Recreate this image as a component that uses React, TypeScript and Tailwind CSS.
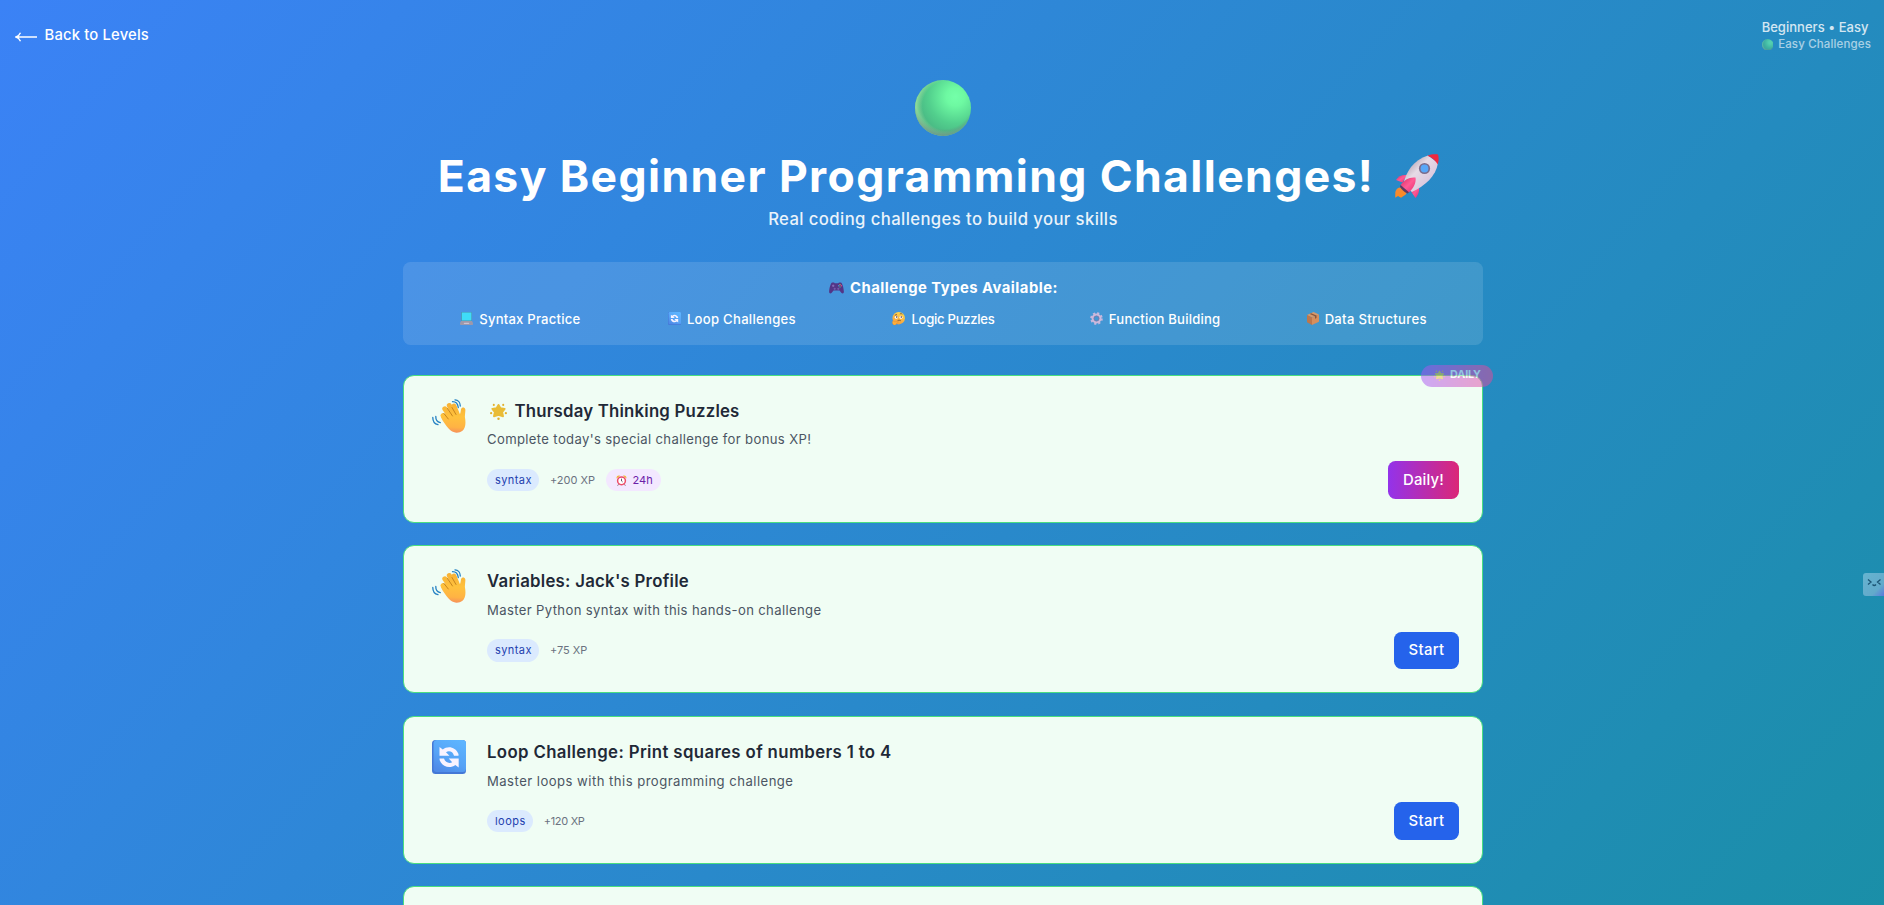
import type { ReactNode } from "react";

function GreenBall({ id, className }: { id: string; className: string }) {
  return (
    <svg viewBox="0 0 56 56" className={className} aria-hidden="true">
      <defs>
        <radialGradient id={`${id}-a`} cx="0.72" cy="0.3" r="0.8">
          <stop offset="0" stopColor="#74ffa9" />
          <stop offset="0.2" stopColor="#6ef9a2" />
          <stop offset="0.6" stopColor="#52cf8d" />
          <stop offset="1" stopColor="#45ad80" />
        </radialGradient>
        <radialGradient id={`${id}-b`} cx="0.58" cy="0.46" r="0.57">
          <stop offset="0.78" stopColor="#9bdc9d" stopOpacity="0" />
          <stop offset="1" stopColor="#9be3a0" stopOpacity="0.9" />
        </radialGradient>
        <radialGradient id={`${id}-c`} cx="0.52" cy="0.36" r="0.64">
          <stop offset="0.8" stopColor="#63907f" stopOpacity="0" />
          <stop offset="1" stopColor="#668f88" stopOpacity="0.9" />
        </radialGradient>
      </defs>
      <circle cx="28" cy="28" r="28" fill={`url(#${id}-a)`} />
      <circle cx="28" cy="28" r="28" fill={`url(#${id}-b)`} />
      <circle cx="28" cy="28" r="28" fill={`url(#${id}-c)`} />
    </svg>
  );
}

function Rocket({ className }: { className: string }) {
  return (
    <svg viewBox="0 0 44 44" className={className} aria-hidden="true">
      <defs>
        <linearGradient id="rk-body" x1="0.2" y1="0.2" x2="0.8" y2="0.8">
          <stop offset="0" stopColor="#b9a9b8" />
          <stop offset="0.35" stopColor="#e6dbe6" />
          <stop offset="1" stopColor="#d8c3dc" />
        </linearGradient>
        <linearGradient id="rk-fin" x1="0" y1="0" x2="1" y2="1">
          <stop offset="0" stopColor="#d82c63" />
          <stop offset="0.5" stopColor="#ff5a95" />
          <stop offset="1" stopColor="#e52c70" />
        </linearGradient>
        <linearGradient id="rk-fire" x1="0" y1="0" x2="0" y2="1">
          <stop offset="0" stopColor="#f08a3c" />
          <stop offset="1" stopColor="#ff8a1f" />
        </linearGradient>
      </defs>
      <path d="M5 33.500C1.500 34 .3 37 .3 39.500L.2 43.700 3 42 6 43.800 8.500 42C11 41 12 39 11.500 37Z" fill="url(#rk-fire)" />
      <path d="M12 21C7 20.500 3 22.500 1 26L7.500 28.500Z" fill="url(#rk-fin)" />
      <path d="M23.500 32C25 36 23.500 40.500 20.500 44L16 37.500Z" fill="url(#rk-fin)" />
      <path d="M8 31C11 18 18 6 33 1.500L43 9C41 22 30 32 17 38Z" fill="url(#rk-body)" />
      <path d="M32.500 1.700C36 .3 40 0 43 .5 44 3 43.800 7 42.800 10.500 40.500 6.500 37 3.500 32.500 1.700Z" fill="#f0283f" />
      <path d="M5.500 31C9 26 14 22.800 20.500 23.500 21.500 29 18 35 13.500 38.800Z" fill="url(#rk-fin)" />
      <path d="M5.500 31 14 38.300 12.500 39.500C9 38 6.500 35.500 5 32.800Z" fill="#5e3a63" />
      <circle cx="29.500" cy="14.500" r="5.600" fill="#7b6c8c" />
      <circle cx="29.500" cy="14.500" r="3.900" fill="#58a7f8" />
    </svg>
  );
}

function Wave() {
  return (
    <svg viewBox="0 0 34 34" className="h-[34px] w-[34px]" aria-hidden="true">
      <defs>
        <linearGradient id="wv" gradientUnits="userSpaceOnUse" x1="22" y1="4" x2="20" y2="34">
          <stop offset="0" stopColor="#f7b036" />
          <stop offset="0.45" stopColor="#ffc23d" />
          <stop offset="0.8" stopColor="#ffb344" />
          <stop offset="1" stopColor="#f58d5c" />
        </linearGradient>
      </defs>
      <g stroke="url(#wv)" strokeLinecap="round" fill="none">
        <path d="M10.800 16.500 16 23" strokeWidth="4.600" />
        <path d="M12.800 9.800 20 20" strokeWidth="5" />
        <path d="M17.300 6.500 23 17" strokeWidth="5" />
        <path d="M22 7 26 17" strokeWidth="4.800" />
      </g>
      <path d="M8.800 17.500 12 15 23.500 12 27.500 16C28.500 14.500 28.600 12.500 29 10.200 29.600 8 32.700 7.800 33.300 10.200 33.600 13 32.800 15.500 32.900 18 34 24 33.600 29 30.500 31.700 27 34.500 22 34 19 31.800 15.500 28.500 10.500 22.500 8.800 17.500Z" fill="url(#wv)" />
      <g stroke="#bf7e1b" strokeWidth="0.9" strokeLinecap="round" fill="none">
        <path d="M11.800 14.300 16.300 20" />
        <path d="M15.500 9.500 20.500 17" />
        <path d="M20 8.500 24 15.500" />
      </g>
      <g stroke="#2380c3" strokeWidth="1.300" strokeLinecap="round" fill="none">
        <path d="M20.500 2.700C24 2.600 25.800 5 26.300 8.500" />
        <path d="M23 .8C26 1 28.300 3.500 28.300 7" />
        <path d="M3.800 17.500C3.700 20.500 5.500 23 8.300 23.700" />
        <path d="M.8 18.500C.8 22 2.700 25 6 25.700" />
      </g>
    </svg>
  );
}

function Loop({ id, className }: { id: string; className: string }) {
  return (
    <svg viewBox="0 0 34 34" className={className} aria-hidden="true">
      <defs>
        <linearGradient id={id} x1="0.8" y1="0" x2="0.3" y2="1">
          <stop offset="0" stopColor="#5db5ff" />
          <stop offset="0.6" stopColor="#56a3f6" />
          <stop offset="1" stopColor="#4f8be8" />
        </linearGradient>
      </defs>
      <rect width="34" height="34" rx="3.500" fill="#4478d6" />
      <rect x="1.500" width="32.500" height="32" rx="3.500" fill={`url(#${id})`} />
      <path d="M7.500 7 10.800 9.500C15.500 5.500 23.500 6.500 26.500 14L26.500 15.800H22C21 11.500 17 10.300 14 12.200L17.500 15.800H7.500Z" fill="#f8f3ff" />
      <path d="M26.700 27.500 23.300 25C18.500 28.800 10.500 27.500 7.700 20.300L7.500 18.500H12C13.300 22.500 17.200 23.900 20.200 22.200L16.700 18.500H26.700Z" fill="#f8f3ff" />
    </svg>
  );
}

function Star({ className }: { className: string }) {
  return (
    <svg viewBox="0 0 18 18" className={className} aria-hidden="true">
      <path d="M9 2 11 5.600 15.500 6.200 12.800 9.600 13.800 14 9 12.600 4.200 14 5.200 9.600 2.500 6.200 7 5.600Z" fill="#e9bc36" stroke="#e9bc36" strokeWidth="2" strokeLinejoin="round" />
      <g fill="#e3b02c">
        <circle cx="4" cy="2" r="1.100" />
        <circle cx="14" cy="2" r="1.100" />
        <circle cx="1.200" cy="10.800" r="1.200" />
        <circle cx="16.800" cy="10.800" r="1.200" />
        <circle cx="9" cy="16.700" r="1.300" />
      </g>
    </svg>
  );
}

function Gamepad() {
  return (
    <svg viewBox="0 0 15 12" className="h-3 w-[15px]" aria-hidden="true">
      <path d="M3.300.4H5L5.800 1.200H9.200L10 .4H11.700C13.500.8 14.600 6 14.900 9.500 15 11.500 13.500 12 12.500 11L10.500 8.500H4.500L2.500 11C1.500 12 0 11.500.1 9.500.4 6 1.500.8 3.300.4Z" fill="#533587" />
      <path d="M3 3.800H5.400M4.200 2.600V5" stroke="#8c73c0" strokeWidth="0.900" />
      <circle cx="5.700" cy="6.800" r="1.100" fill="#7459ab" />
      <circle cx="9.300" cy="6.800" r="1.100" fill="#7459ab" />
      <circle cx="11" cy="2.600" r="0.700" fill="#d9b04a" />
      <circle cx="12.300" cy="3.800" r="0.700" fill="#e0508c" />
      <circle cx="9.800" cy="3.800" r="0.700" fill="#3fa7e0" />
      <circle cx="11" cy="5" r="0.700" fill="#4dbb76" />
    </svg>
  );
}

function Laptop() {
  return (
    <svg viewBox="0 0 13 13" className="size-[13px]" aria-hidden="true">
      <rect x="1" y="0" width="11" height="9" rx="0.800" fill="#4b8fae" />
      <rect x="1.800" y="0.500" width="9.600" height="8" fill="#3fdcf8" />
      <path d="M1 9H12L13 11V12.200C13 12.700 12.700 13 12.200 13H.8C.3 13 0 12.700 0 12.200V11Z" fill="#9c98ab" />
      <path d="M4.200 10.800H8.800L9.300 12H3.700Z" fill="#cbc3d2" />
    </svg>
  );
}

function Thinking() {
  return (
    <svg viewBox="0 0 13 13" className="size-[13px]" aria-hidden="true">
      <defs>
        <linearGradient id="th" x1="0.7" y1="0" x2="0.3" y2="1">
          <stop offset="0" stopColor="#ffd84a" />
          <stop offset="1" stopColor="#f59a3c" />
        </linearGradient>
      </defs>
      <circle cx="6.700" cy="6.200" r="6.200" fill="url(#th)" />
      <circle cx="4.300" cy="5.200" r="1.500" fill="#fff" />
      <circle cx="9" cy="5.200" r="1.500" fill="#fff" />
      <circle cx="4.700" cy="5" r="0.800" fill="#4b2b35" />
      <circle cx="9.300" cy="5" r="0.800" fill="#4b2b35" />
      <path d="M2.800 3.200 5 2.600M7.800 2C8.700 1.500 9.700 1.600 10.300 2.300M5.500 8.800C6.500 8 8 8.100 8.800 8.800" stroke="#5b3136" strokeWidth="0.700" fill="none" />
      <path d="M.5 9.500C1.200 8.800 2 9 2.300 10L5.800 9.300C6.500 9.300 6.600 10.200 6 10.400L4.500 11C5 12.500 3.500 13.200 2.200 13 .7 12.700 0 11 .5 9.500Z" fill="#ffb03a" stroke="#df8228" strokeWidth="0.300" />
    </svg>
  );
}

function Gear() {
  return (
    <svg viewBox="0 0 13 13" className="size-[13px]" aria-hidden="true">
      <g fill="none">
        <circle cx="6.500" cy="6.500" r="5.200" stroke="#c7b7dd" strokeWidth="2.200" strokeDasharray="2.100 1.984" />
        <circle cx="6.500" cy="6.500" r="3.800" stroke="#cbb9dc" strokeWidth="2.300" />
        <circle cx="6.500" cy="6.500" r="2.600" stroke="#86739e" strokeWidth="0.700" />
      </g>
    </svg>
  );
}

function Box() {
  return (
    <svg viewBox="0 0 12 13" className="h-[13px] w-3" aria-hidden="true">
      <path d="M6.500 0 12 2.500 5 5.500 0 3Z" fill="#d79a6c" />
      <path d="M0 3 5 5.500V13L0 10.300Z" fill="#bd774c" />
      <path d="M5 5.500 12 2.500V9.800L5 13Z" fill="#d68f5d" />
      <path d="M2.700 1.900 8 4.200V6.700L9.500 6V3.600L4.200 1.200Z" fill="#8f5537" />
    </svg>
  );
}

function Alarm() {
  return (
    <svg viewBox="0 0 11 11" className="size-[11px]" aria-hidden="true">
      <path d="M.6 3.600C.2 1.500 2 .1 4 .8ZM10.400 3.600C10.800 1.500 9 .1 7 .8Z" fill="#f3b531" />
      <path d="M2.700 9 1.700 10.600M8.300 9 9.300 10.600" stroke="#a8899f" strokeWidth="1" strokeLinecap="round" />
      <circle cx="5.500" cy="5.800" r="3.900" fill="#fff" stroke="#ee4c68" strokeWidth="1.500" />
      <path d="M5.500 3.700V6L6.600 6.900" stroke="#48324f" strokeWidth="0.800" fill="none" />
    </svg>
  );
}

const types: { icon: ReactNode; label: ReactNode }[] = [
  { icon: <Laptop />, label: <span className="tracking-[0.200px]">Syntax Practice</span> },
  { icon: <Loop id="lp-type" className="size-[13px]" />, label: <span className="tracking-[0.280px]">Loop Challenges</span> },
  { icon: <Thinking />, label: <span className="tracking-[-0.280px]">Logic Puzzles</span> },
  { icon: <Gear />, label: <span className="tracking-[0.200px]">Function Building</span> },
  { icon: <Box />, label: <span className="tracking-[0.300px]">Data Structures</span> },
];

type CardProps = {
  icon: ReactNode;
  title: ReactNode;
  description: ReactNode;
  tag: ReactNode;
  xp: ReactNode;
  daily?: boolean;
};

function ChallengeCard({ icon, title, description, tag, xp, daily }: CardProps) {
  return (
    <article className="relative flex h-[148.100px] shrink-0 rounded-[11px] border border-[#4ade80] bg-[#f0fdf4] pt-[23.300px] pr-[23px] pl-[27.500px]">
      {daily && (
        <div className="absolute -top-[11px] -right-[11px] flex h-[22px] w-[72px] items-center gap-[5px] rounded-full bg-[linear-gradient(to_right,#a855f7,#ec4899)] pl-[13px] text-[10.800px] font-bold text-white opacity-50">
          <Star className="size-[11px]" />
          <span className="tracking-[-0.120px]">DAILY</span>
        </div>
      )}
      <div className="w-[55.500px] shrink-0">{icon}</div>
      <div className="flex min-w-0 grow flex-col">
        <h3 className="flex items-center text-[16.800px] leading-[25px] font-semibold text-[#1f2937]">{title}</h3>
        <p className="mt-[5.700px] text-[13.100px] leading-5 text-[#4b5563]">{description}</p>
        <div className="mt-[11.800px] flex items-center justify-between">
          <div className="flex items-center text-[11px] leading-[22.500px]">
            <span className="rounded-full bg-[#dbeafe] pr-[7px] pl-2 text-[#1e40af]">{tag}</span>
            <span className="ml-[11px] text-[#6b7280]">{xp}</span>
            {daily && (
              <span className="ml-[11.500px] flex items-center gap-[5px] rounded-full bg-[#f3e8ff] pr-2 pl-[10px] text-[#6b21a8]">
                <Alarm />
                <span className="tracking-[0.170px]">24h</span>
              </span>
            )}
          </div>
          {daily ? (
            <button className="h-[37.500px] w-[71px] rounded-[7.500px] bg-[linear-gradient(to_right,#9333ea,#db2777)] text-[14.900px] font-medium tracking-[0.180px] text-white">
              Daily!
            </button>
          ) : (
            <button className="h-[37.500px] w-[65px] rounded-[7.500px] bg-[#2563eb] text-[14.900px] font-medium tracking-[0.350px] text-white">
              Start
            </button>
          )}
        </div>
      </div>
    </article>
  );
}

export default function App() {
  return (
    <div className="flex h-screen flex-col overflow-hidden bg-[linear-gradient(to_bottom_right,#3b82f6,#0d9488)] bg-[length:100%_2150px] bg-no-repeat font-['Inter',sans-serif] whitespace-nowrap">
      <header className="flex h-20 shrink-0 items-start justify-between pr-[13px] pl-[15px]">
        <a className="flex items-center gap-[7.500px] pt-[23px] text-[14.800px] leading-6 font-medium text-white">
          <svg viewBox="0 0 22 10" className="mt-[3px] h-[10px] w-[22px]" fill="none" stroke="currentColor" strokeWidth="1.400" aria-hidden="true">
            <path d="M22 5H1.500M5.500.8C4.500 3 3 4.400 1 5 3 5.600 4.500 7 5.500 9.200" />
          </svg>
          <span className="tracking-[0.170px]">Back to Levels</span>
        </a>
        <div className="pt-[18px] text-white">
          <div className="text-[13px] leading-[19px] font-medium tracking-[0.030px] opacity-80">Beginners • Easy</div>
          <div className="flex items-center gap-[5px] text-[11.500px] leading-[15px] font-medium opacity-60">
            <GreenBall id="gb-s" className="size-[11.500px]" />
            <span className="tracking-[0.140px]">Easy Challenges</span>
          </div>
        </div>
      </header>

      <main className="mx-auto flex w-[1082px] shrink-0 flex-col pl-0.5">
        <div className="flex flex-col items-center text-white">
          <GreenBall id="gb" className="size-14" />
          <h1 className="mt-[15.500px] flex items-center text-[44.500px] leading-[48px] font-bold">
            <span className="tracking-[1.380px]">Easy Beginner Programming Challenges!</span>
            <Rocket className="mr-[9px] ml-[21px] size-[44px]" />
          </h1>
          <p className="mt-[7px] text-[16.700px] leading-6 font-medium tracking-[0.400px] opacity-90">
            Real coding challenges to build your skills
          </p>
        </div>

        <section className="mt-[31.500px] h-[83px] rounded-[7.500px] bg-white/12 pt-[14.500px] pr-[10.500px] pl-[11.500px] text-white">
          <h2 className="flex items-center justify-center gap-1.5 text-[14.800px] leading-[22px] font-bold">
            <Gamepad />
            <span className="tracking-[0.480px]">Challenge Types Available:</span>
          </h2>
          <div className="mt-[10px] grid grid-cols-5 text-[13.100px] leading-5 font-medium">
            {types.map((t, i) => (
              <div key={i} className="flex items-center justify-center gap-1.5">
                {t.icon}
                {t.label}
              </div>
            ))}
          </div>
        </section>

        <div className="mt-[29.500px] flex flex-col gap-[22.500px]">
          <ChallengeCard
            daily
            icon={<Wave />}
            title={
              <>
                <Star className="mr-2 ml-[2.500px] size-[17px]" />
                <span className="tracking-[0.200px]">Thursday Thinking Puzzles</span>
              </>
            }
            description={<span className="tracking-[0.355px]">Complete today's special challenge for bonus XP!</span>}
            tag={<span className="tracking-[0.430px]">syntax</span>}
            xp={<span className="tracking-[-0.020px]">+200 XP</span>}
          />
          <ChallengeCard
            icon={<Wave />}
            title={<span className="tracking-[0.260px]">Variables: Jack's Profile</span>}
            description={<span className="tracking-[0.365px]">Master Python syntax with this hands-on challenge</span>}
            tag={<span className="tracking-[0.430px]">syntax</span>}
            xp={<span>+75 XP</span>}
          />
          <ChallengeCard
            icon={<Loop id="lp-card" className="size-[34px]" />}
            title={<span className="tracking-[0.365px]">Loop Challenge: Print squares of numbers 1 to 4</span>}
            description={<span className="tracking-[0.470px]">Master loops with this programming challenge</span>}
            tag={<span className="tracking-[0.450px]">loops</span>}
            xp={<span className="tracking-[-0.300px]">+120 XP</span>}
          />
          <div className="h-[148.100px] shrink-0 rounded-[11px] border border-[#4ade80] bg-[#f0fdf4]" />
        </div>
      </main>

      <div className="fixed top-[573px] right-0 h-[23px] w-[21px] overflow-hidden rounded-l-[3px] bg-[linear-gradient(135deg,#67b4d0_0%,#62aacb_70%,#5a79dc_100%)]">
        <svg viewBox="0 0 21 23" className="h-[23px] w-[21px]" fill="none" stroke="#1c5575" strokeWidth="1.300" aria-hidden="true">
          <path d="M5 6.500 8 9 5 11.500M17.500 6.500 14.500 9 17.500 11.500M9.500 11.500Q11.300 13.500 13 11.500" />
        </svg>
      </div>
    </div>
  );
}
